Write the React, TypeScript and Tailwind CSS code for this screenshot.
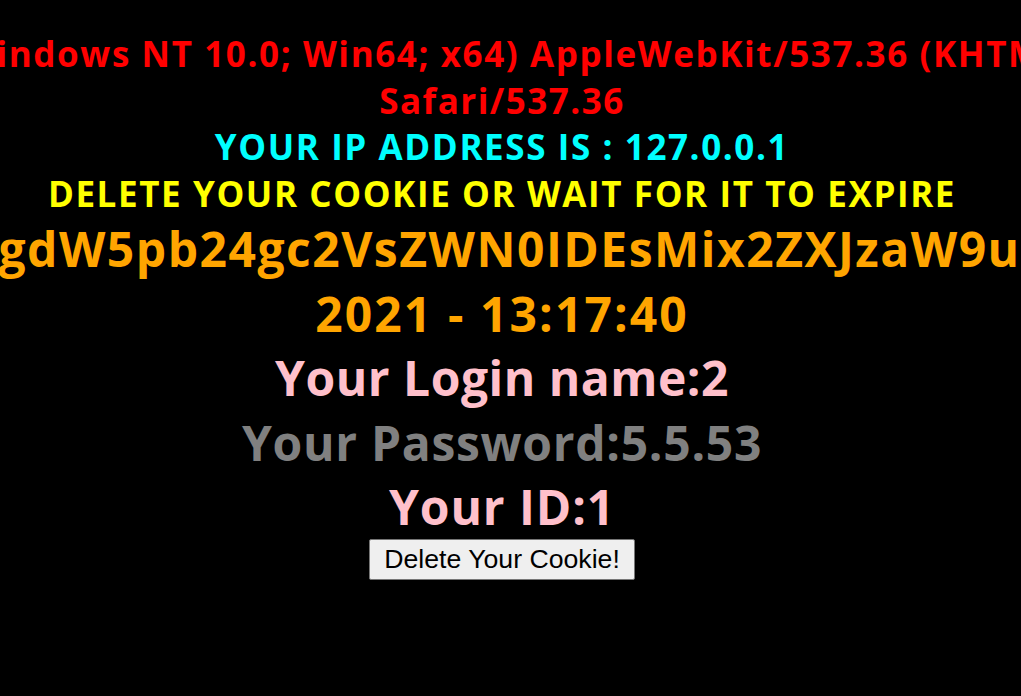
const agent =
  'YOUR USER AGENT IS : Mozilla/5.0 (Windows NT 10.0; Win64; x64) AppleWebKit/537.36 (KHTML, like Gecko) Chrome/91.0.4472.77';
const cookie = 'JykgdW5pb24gc2VsZWN0IDEsMix2ZXJzaW9uKCkj';

export default function App() {
  return (
    <div className="h-[696px] w-full overflow-hidden bg-black pr-[17px]">
      <div className="flex flex-col items-center whitespace-nowrap pt-[31px] text-center font-['Open_Sans',sans-serif] font-bold">
        <div className="text-[35px] leading-[46.5px] tracking-[1.6px] text-[#ff0000]">{agent}</div>
        <div className="text-[35px] leading-[46.5px] tracking-[1.5px] text-[#ff0000]">Safari/537.36</div>
        <div className="text-[35px] leading-[46.5px] tracking-[1.6px] text-[#00ffff]">YOUR IP ADDRESS IS : 127.0.0.1</div>
        <div className="text-[35px] leading-[46.5px] tracking-[1.6px] text-[#ffff00]">
          DELETE YOUR COOKIE OR WAIT FOR IT TO EXPIRE
        </div>
        <div className="text-[48px] leading-[64.5px] tracking-[1.5px] text-[#ffa500]">
          YOUR COOKIE : uname = {cookie} and expires: Sat 03 Jul
        </div>
        <div className="text-[48px] leading-[64.5px] tracking-[2.1px] text-[#ffa500]">2021 - 13:17:40</div>
        <div className="text-[48px] leading-[64.5px] tracking-[0.5px] text-[#ffc0cb]">Your Login name:2</div>
        <div className="text-[48px] leading-[64.5px] tracking-[0.7px] text-[#808080]">Your Password:5.5.53</div>
        <div className="text-[48px] leading-[64.5px] tracking-[0.9px] text-[#ffc0cb]">Your ID:1</div>
        <button className="-mt-[1px] h-[41px] rounded-[2px] border border-[#767676] bg-[#efefef] px-[14px] font-['Liberation_Sans',Arial,sans-serif] text-[26.67px] font-normal leading-[30.6px] text-black">
          Delete Your Cookie!
        </button>
      </div>
    </div>
  );
}
